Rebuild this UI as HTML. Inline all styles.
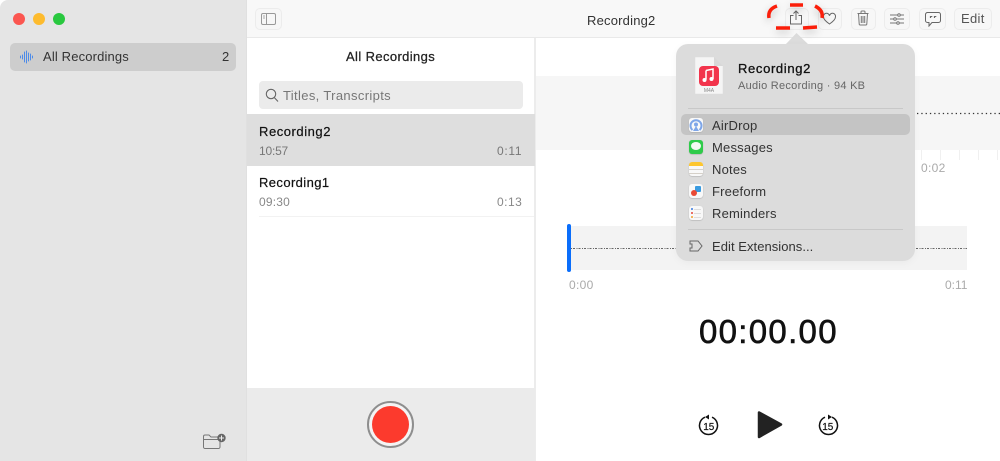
<!DOCTYPE html>
<html><head><meta charset="utf-8"><style>
html,body{margin:0;padding:0;background:#fff}
body{width:1000px;height:461px;overflow:hidden;position:relative;font-family:"Liberation Sans",sans-serif;color:#222}
div,span,svg{position:absolute;box-sizing:border-box}
#w{left:0;top:0;width:1000px;height:461px;filter:blur(.3px)}
.t{white-space:nowrap;line-height:16px}
.btn{top:8px;height:22px;border:1px solid #ececec;border-radius:5px;background:#f7f7f7}
.ic{left:689px;width:14px;height:14px;border-radius:3px;background:#f8f8f8;box-shadow:0 .5px 1px #aaa;overflow:hidden}
.m{left:712px;font-size:13px;color:#333;letter-spacing:.2px}
</style></head><body><div id="w">
<!-- sidebar -->
<div style="left:0;top:0;width:247px;height:461px;background:#e5e5e5;border-right:1px solid #e0e0e0;border-top-left-radius:8px"></div>
<div style="left:13px;top:13px;width:12px;height:12px;border-radius:50%;background:#fb5650"></div>
<div style="left:33px;top:13px;width:12px;height:12px;border-radius:50%;background:#fdbb2e"></div>
<div style="left:53px;top:13px;width:12px;height:12px;border-radius:50%;background:#29c83f"></div>
<div style="left:10px;top:43px;width:226px;height:28px;border-radius:5px;background:#cdcdcd"></div>
<svg style="left:19px;top:50px" width="15" height="14" viewBox="0 0 15 14" stroke="#4d8be8" stroke-width="1" stroke-linecap="round"><path d="M1.5 6v2M3.500 5v4M5.500 2v10M7.500 1v12M9.500 3v8M11.500 4v6M13.500 6v2"/></svg>
<div class="t" style="left:43px;top:49px;font-size:13px;color:#333;letter-spacing:.15px">All Recordings</div>
<div class="t" style="left:222px;top:49px;font-size:13px;color:#333">2</div>
<svg style="left:203px;top:433px" width="24" height="18" viewBox="0 0 24 18" fill="none" stroke="#777" stroke-width="1"><path d="M.5 3.500a1.500 1.500 0 0 1 1.500-1.500h4l2 2h9v10a1.500 1.500 0 0 1-1.500 1.500H2a1.500 1.500 0 0 1-1.500-1.500zM.5 6.500h16.500"/><circle cx="18.500" cy="5" r="4.200" fill="#666" stroke="none"/><path d="M18.500 2.500v5M16 5h5" stroke="#eee"/></svg>
<!-- toolbar -->
<div style="left:247px;top:0;width:753px;height:38px;background:#f8f8f8;border-bottom:1px solid #e9e9e9"></div>
<div class="btn" style="left:255px;width:27px"></div>
<svg style="left:261px;top:13px" width="15" height="12" viewBox="0 0 15 12" fill="none" stroke="#999"><rect x=".5" y=".5" width="14" height="11" rx="1.500"/><path d="M5.500 .5v11"/><path d="M2 3h2M2 5h2" stroke="#aaa"/></svg>
<div class="t" style="left:587px;top:13px;font-size:13px;color:#333;letter-spacing:.2px">Recording2</div>
<div class="btn" style="left:785px;width:24px"></div>
<svg style="left:789px;top:10px" width="14" height="15" viewBox="0 0 14 15" fill="none" stroke="#666" stroke-width="1"><path d="M4.500 5.500H1.500v8.500h11V5.500H9.500M7 10V1M4.500 3.500 7 1l2.500 2.500"/></svg>
<div class="btn" style="left:818px;width:24px"></div>
<svg style="left:822px;top:12px" width="15" height="13" viewBox="0 0 15 13" fill="none" stroke="#666" stroke-width="1"><path d="M7.500 12C3 9 1.500 7 1.500 4.800a3 3 0 0 1 6-1 3 3 0 0 1 6 1C13.500 7 12 9 7.500 12z"/></svg>
<div class="btn" style="left:851px;width:25px"></div>
<svg style="left:857px;top:10px" width="12" height="16" viewBox="0 0 12 16" fill="none" stroke="#777" stroke-width="1"><path d="M.5 3.500h11M4 3.500V2a1 1 0 0 1 1-1h2a1 1 0 0 1 1 1v1.500M1.500 3.500l.7 10.500a1 1 0 0 0 1 1h5.600a1 1 0 0 0 1-1l.7-10.500M4.300 6v7M6 6v7M7.700 6v7"/></svg>
<div class="btn" style="left:884px;width:26px"></div>
<svg style="left:890px;top:13px" width="14" height="12" viewBox="0 0 14 12" fill="none" stroke="#777" stroke-width="1"><path d="M0 2h14M0 6h14M0 10h14"/><circle cx="9" cy="2" r="1.300" fill="#f7f7f7"/><circle cx="5" cy="6" r="1.300" fill="#f7f7f7"/><circle cx="8" cy="10" r="1.300" fill="#f7f7f7"/></svg>
<div class="btn" style="left:919px;width:27px"></div>
<svg style="left:925px;top:12px" width="16" height="15" viewBox="0 0 16 15" fill="none" stroke="#666" stroke-width="1"><path d="M2.500 .5h11a2 2 0 0 1 2 2v6a2 2 0 0 1-2 2H7l-3 3.500v-3.500H2.500a2 2 0 0 1-2-2v-6a2 2 0 0 1 2-2z"/><path d="M5.500 4v2M6.700 4v1M9.500 4v2M10.700 4v1" stroke-width="1.200"/></svg>
<div class="btn" style="left:954px;width:38px"></div>
<div class="t" style="left:961px;top:11px;font-size:13px;color:#555;letter-spacing:.3px">Edit</div>
<!-- list -->
<div style="left:247px;top:38px;width:289px;height:423px;background:#fff;border-right:2px solid #ececec"></div>
<div class="t" style="left:346px;top:49px;font-size:13px;color:#222;letter-spacing:.38px;-webkit-text-stroke:.25px #222">All Recordings</div>
<div style="left:259px;top:81px;width:264px;height:28px;border-radius:4px;background:#ebebeb"></div>
<svg style="left:265px;top:88px" width="14" height="15" viewBox="0 0 14 15" fill="none" stroke="#666" stroke-width="1.100"><circle cx="6" cy="6" r="4.700"/><path d="M9.500 9.700 13 13.500"/></svg>
<div class="t" style="left:283px;top:88px;font-size:13px;color:#777;letter-spacing:.35px">Titles, Transcripts</div>
<div style="left:247px;top:114px;width:288px;height:52px;background:#dedede"></div>
<div class="t" style="left:259px;top:124px;font-size:13px;color:#111;letter-spacing:.55px;-webkit-text-stroke:.2px #111">Recording2</div>
<div class="t" style="left:259px;top:143px;font-size:12px;color:#777;letter-spacing:-.2px">10:57</div>
<div class="t" style="left:497px;top:143px;font-size:12px;color:#777;letter-spacing:.7px">0:11</div>
<div class="t" style="left:259px;top:175px;font-size:13px;color:#111;letter-spacing:.4px;-webkit-text-stroke:.2px #111">Recording1</div>
<div class="t" style="left:259px;top:194px;font-size:12px;color:#888;letter-spacing:.2px">09:30</div>
<div class="t" style="left:497px;top:194px;font-size:12px;color:#888;letter-spacing:.5px">0:13</div>
<div style="left:259px;top:216px;width:275px;height:1px;background:#f2f2f2"></div>
<div style="left:247px;top:388px;width:288px;height:73px;background:#ebebeb"></div>
<div style="left:367px;top:401px;width:47px;height:47px;border-radius:50%;border:2px solid #8e8e8e;background:#f4f4f4"></div>
<div style="left:372px;top:406px;width:37px;height:37px;border-radius:50%;background:#fc3a2d"></div>
<!-- detail -->
<div style="left:536px;top:76px;width:464px;height:74px;background:#f6f6f6"></div>
<svg style="left:916px;top:111px" width="84" height="4"><path d="M1 2.500H84" stroke="#333" stroke-width="1.300" stroke-dasharray="1.300 3"/></svg>
<svg style="left:916px;top:150px" width="84" height="10" stroke="#f0f0f0"><path d="M5.500 0v10M24.500 0v10M43.500 0v10M62.500 0v10M81.500 0v10"/></svg>
<div class="t" style="left:921px;top:160px;font-size:12px;color:#aaa;letter-spacing:.3px">0:02</div>
<div style="left:570px;top:226px;width:397px;height:44px;background:#f3f3f3"></div>
<svg style="left:571px;top:246px" width="110" height="4"><path d="M0 2.500H110" stroke="#666" stroke-width="1" stroke-dasharray="1 1 2 1.500"/></svg>
<svg style="left:914px;top:246px" width="53" height="4"><path d="M0 2.500H53" stroke="#666" stroke-width="1" stroke-dasharray="1 1 2 1.500"/></svg>
<div style="left:567px;top:224px;width:4px;height:48px;border-radius:2px;background:#0a6efb"></div>
<div class="t" style="left:569px;top:277px;font-size:12px;color:#aaa;letter-spacing:.3px">0:00</div>
<div class="t" style="left:945px;top:277px;font-size:12px;color:#aaa;letter-spacing:0">0:11</div>
<div class="t" style="left:699px;top:312px;font-size:33px;line-height:40px;color:#111;letter-spacing:1.3px;-webkit-text-stroke:.6px #111">00:00.00</div>
<svg style="left:697px;top:412px" width="24" height="26" viewBox="0 0 24 26" fill="none" stroke="#111" stroke-width="1.500"><path d="M8 5.200a9 9 0 1 0 7 0"/><path d="M12 2.500v5L8 5z" fill="#111" stroke="none"/><text x="11.800" y="18" font-size="10" text-anchor="middle" fill="#111" stroke="#111" stroke-width=".2" font-family="Liberation Sans">15</text></svg>
<svg style="left:756px;top:410px" width="27" height="29" viewBox="0 0 27 29"><path d="M3 2.500 25 14.500 3 27z" fill="#222" stroke="#222" stroke-width="2.500" stroke-linejoin="round"/></svg>
<svg style="left:816px;top:412px" width="24" height="26" viewBox="0 0 24 26" fill="none" stroke="#111" stroke-width="1.500"><path d="M16 5.200a9 9 0 1 1-7 0"/><path d="M12 2.500v5L16 5z" fill="#111" stroke="none"/><text x="11.800" y="18" font-size="10" text-anchor="middle" fill="#111" stroke="#111" stroke-width=".2" font-family="Liberation Sans">15</text></svg>
<!-- popover -->
<svg style="left:785px;top:33px" width="24" height="12"><path d="M0 12 11.500 0 24 12z" fill="#dcdcdc"/></svg>
<div style="left:676px;top:44px;width:239px;height:217px;border-radius:12px;background:#dcdcdc;box-shadow:0 2px 8px rgba(0,0,0,.04)"></div>
<svg style="left:694px;top:56px" width="30" height="40" viewBox="0 0 30 40"><path d="M1 1h19l9 9v28H1z" fill="#f5f5f5" stroke="#ddd" stroke-width=".5"/><path d="M20 1v9h9z" fill="#d8d8d8"/><rect x="5" y="10" width="20" height="20" rx="4" fill="#f2344c"/><path d="M12 14.500l7-1.500v10" fill="none" stroke="#fff" stroke-width="1.500"/><path d="M12 14.500v9" stroke="#fff" stroke-width="1.500"/><circle cx="10.500" cy="24" r="2" fill="#fff"/><circle cx="17.500" cy="23" r="2" fill="#fff"/><text x="15" y="36" font-size="5" fill="#888" text-anchor="middle" font-family="Liberation Sans">M4A</text></svg>
<div class="t" style="left:738px;top:61px;font-size:13px;color:#111;letter-spacing:.65px;-webkit-text-stroke:.3px #111">Recording2</div>
<div class="t" style="left:738px;top:78px;font-size:11px;color:#666;letter-spacing:.27px">Audio Recording · 94 KB</div>
<div style="left:688px;top:108px;width:215px;height:1px;background:#c8c8c8"></div>
<div style="left:681px;top:114px;width:229px;height:21px;border-radius:5px;background:#c4c4c4"></div>
<div class="ic" style="top:118px"></div>
<svg style="left:689px;top:118px" width="14" height="14" viewBox="0 0 14 14"><path d="M3.500 12A5.500 5.500 0 1 1 10.500 12" fill="none" stroke="#7ea6e8" stroke-width="2"/><path d="M7 8 4 13h6z" fill="#7ea6e8"/><circle cx="7" cy="6.500" r="2" fill="#7ea6e8"/></svg>
<div class="t m" style="top:118px">AirDrop</div>
<div class="ic" style="top:140px;background:#2fcb4a"></div>
<div style="left:691px;top:142px;width:10px;height:8px;border-radius:50%;background:#f4f9f2"></div>
<div class="t m" style="top:140px">Messages</div>
<div class="ic" style="top:162px"><div style="left:0;top:0;width:14px;height:4px;background:#fdc62e"></div><div style="left:0;top:7px;width:14px;height:1px;background:#d5d0c8"></div><div style="left:0;top:11px;width:14px;height:1px;background:#d5d0c8"></div></div>
<div class="t m" style="top:162px">Notes</div>
<div class="ic" style="top:184px"><div style="left:6px;top:2px;width:6px;height:6px;background:#3a9be0;border-radius:1px"></div><div style="left:2px;top:6px;width:6px;height:6px;border-radius:50%;background:#ea4a35"></div></div>
<div class="t m" style="top:184px">Freeform</div>
<div class="ic" style="top:206px"><div style="left:2px;top:2px;width:2px;height:2px;border-radius:50%;background:#3a7be0"></div><div style="left:2px;top:6px;width:2px;height:2px;border-radius:50%;background:#e5453a"></div><div style="left:2px;top:10px;width:2px;height:2px;border-radius:50%;background:#f0a030"></div><div style="left:5px;top:2.500px;width:7px;height:1px;background:#ddd"></div><div style="left:5px;top:6.500px;width:7px;height:1px;background:#ddd"></div><div style="left:5px;top:10.500px;width:7px;height:1px;background:#ddd"></div></div>
<div class="t m" style="top:206px">Reminders</div>
<div style="left:688px;top:229px;width:215px;height:1px;background:#c8c8c8"></div>
<svg style="left:689px;top:240px" width="14" height="12" viewBox="0 0 14 12" fill="none" stroke="#666"><path d="M1 1h8l4 5-4 5H1V8h2V4H1z"/></svg>
<div class="t m" style="top:239px;letter-spacing:.05px">Edit Extensions...</div>
<!-- red dashed annotation -->
<svg style="left:760px;top:0;filter:drop-shadow(0 3px 4px rgba(0,0,0,.22))" width="70" height="40" viewBox="0 0 70 40" fill="none" stroke="#fb1e0a" stroke-width="3.500"><path d="M17 6C11 8 8 12 9 18"/><path d="M30 5H43"/><path d="M55 6C61 9 63 13 62 18"/><path d="M16 28 30 28"/><path d="M43 28 57 27"/></svg>
</div></body></html>
